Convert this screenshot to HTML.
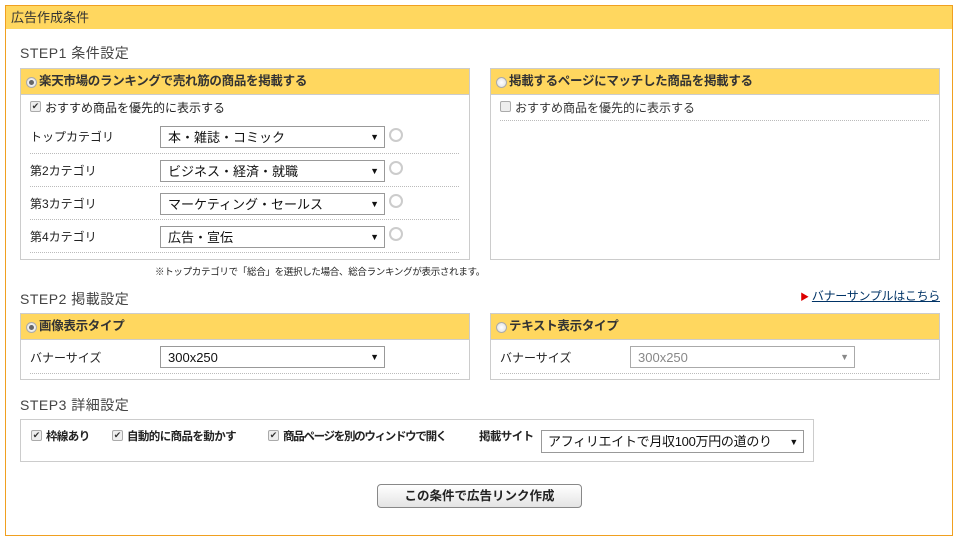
<!DOCTYPE html>
<html><head><meta charset="utf-8"><style>
*{box-sizing:border-box;margin:0;padding:0}
body{width:960px;height:541px;background:#fff;font-family:"Liberation Sans","Noto Sans CJK JP",sans-serif;color:#222;position:relative;overflow:hidden}
.a{position:absolute;white-space:nowrap}
.outer{left:5px;top:5px;width:948px;height:531px;border:1px solid #f0a020}
.hd{left:6px;top:6px;width:946px;height:23px;background:#ffd75f;font-size:13px;line-height:23px;padding-left:5px;color:#333}
.step{font-size:14px;color:#444;letter-spacing:.5px}
.panel{border:1px solid #ccc;background:#fff}
.ph{position:absolute;left:0;top:0;right:0;height:26px;background:#ffd75f;border-bottom:1px solid #ccc;font-size:12.5px;font-weight:bold;line-height:25px;padding-left:18px;color:#333;letter-spacing:-.3px}
.rad{position:absolute;width:11px;height:11px;border-radius:50%;border:1px solid #aaa;background:radial-gradient(circle,#fff,#ddd)}
.rad.on::after{content:"";position:absolute;left:2px;top:2px;width:5px;height:5px;border-radius:50%;background:#666}
.lbl{font-size:12px}
.dot{position:absolute;height:0;border-top:1px dotted #bbb}
.sel{position:absolute;height:22px;border:1px solid #999;background:#fff;font-size:13px;line-height:21px;padding-left:7px;color:#111;white-space:nowrap}
.sel::after{content:"▼";position:absolute;right:5px;top:0;font-size:9px}
.sel.dis{color:#888;border-color:#aaa}
.sel.dis::after{color:#888}
.cb{position:absolute;width:11px;height:11px;border:1px solid #aaa;background:#eee;border-radius:2px;font-size:9px;line-height:9px;text-align:center;color:#333}
.ring{position:absolute;width:14px;height:14px;border-radius:50%;border:2px solid #ccc}
.s3{font-size:11.5px;font-weight:bold;letter-spacing:-.6px}
</style></head><body>
<div class="a outer"></div>
<div class="a hd">広告作成条件</div>
<div class="a step" style="left:20px;top:43px">STEP1 条件設定</div>

<div class="a panel" style="left:20px;top:68px;width:450px;height:192px">
<div class="ph">楽天市場のランキングで売れ筋の商品を掲載する</div>
<div class="rad on" style="left:5px;top:8px"></div>
</div>
<div class="cb a" style="left:30px;top:101px">✔</div>
<div class="a lbl" style="left:45px;top:99px">おすすめ商品を優先的に表示する</div>
<div class="a lbl" style="left:30px;top:128px">トップカテゴリ</div>
<div class="sel" style="left:160px;top:126px;width:225px">本・雑誌・コミック</div>
<div class="ring" style="left:389px;top:128px"></div>
<div class="dot" style="left:30px;top:153px;width:429px"></div>
<div class="a lbl" style="left:30px;top:162px">第2カテゴリ</div>
<div class="sel" style="left:160px;top:160px;width:225px">ビジネス・経済・就職</div>
<div class="ring" style="left:389px;top:161px"></div>
<div class="dot" style="left:30px;top:186px;width:429px"></div>
<div class="a lbl" style="left:30px;top:195px">第3カテゴリ</div>
<div class="sel" style="left:160px;top:193px;width:225px">マーケティング・セールス</div>
<div class="ring" style="left:389px;top:194px"></div>
<div class="dot" style="left:30px;top:219px;width:429px"></div>
<div class="a lbl" style="left:30px;top:228px">第4カテゴリ</div>
<div class="sel" style="left:160px;top:226px;width:225px">広告・宣伝</div>
<div class="ring" style="left:389px;top:227px"></div>
<div class="dot" style="left:30px;top:252px;width:429px"></div>

<div class="a panel" style="left:490px;top:68px;width:450px;height:192px">
<div class="ph">掲載するページにマッチした商品を掲載する</div>
<div class="rad" style="left:5px;top:8px"></div>
</div>
<div class="cb a" style="left:500px;top:101px"></div>
<div class="a lbl" style="left:515px;top:99px;color:#333">おすすめ商品を優先的に表示する</div>
<div class="dot" style="left:500px;top:120px;width:429px"></div>

<div class="a" style="left:155px;top:264px;font-size:9.5px;letter-spacing:-.3px">※トップカテゴリで「総合」を選択した場合、総合ランキングが表示されます。</div>

<div class="a step" style="left:20px;top:289px">STEP2 掲載設定</div>
<div class="a" style="right:20px;top:287px;font-size:12px;letter-spacing:-.3px"><span style="color:#d00;font-size:9px">▶</span> <span style="color:#036;text-decoration:underline">バナーサンプルはこちら</span></div>

<div class="a panel" style="left:20px;top:313px;width:450px;height:67px">
<div class="ph">画像表示タイプ</div>
<div class="rad on" style="left:5px;top:8px"></div>
</div>
<div class="a lbl" style="left:30px;top:349px">バナーサイズ</div>
<div class="sel" style="left:160px;top:346px;width:225px">300x250</div>
<div class="dot" style="left:30px;top:373px;width:429px"></div>

<div class="a panel" style="left:490px;top:313px;width:450px;height:67px">
<div class="ph">テキスト表示タイプ</div>
<div class="rad" style="left:5px;top:8px"></div>
</div>
<div class="a lbl" style="left:500px;top:349px">バナーサイズ</div>
<div class="sel dis" style="left:630px;top:346px;width:225px">300x250</div>
<div class="dot" style="left:500px;top:373px;width:429px"></div>

<div class="a step" style="left:20px;top:395px">STEP3 詳細設定</div>
<div class="a" style="left:20px;top:419px;width:794px;height:43px;border:1px solid #ccc"></div>
<div class="cb a" style="left:31px;top:430px">✔</div>
<div class="a s3" style="left:46px;top:428px">枠線あり</div>
<div class="cb a" style="left:112px;top:430px">✔</div>
<div class="a s3" style="left:127px;top:428px">自動的に商品を動かす</div>
<div class="cb a" style="left:268px;top:430px">✔</div>
<div class="a s3" style="left:283px;top:428px;letter-spacing:-1.3px">商品ページを別のウィンドウで開く</div>
<div class="a s3" style="left:479px;top:428px">掲載サイト</div>
<div class="sel" style="left:541px;top:430px;width:263px;height:23px;line-height:22px;font-size:13px;padding-left:6px;letter-spacing:-.3px">アフィリエイトで月収100万円の道のり</div>

<div class="a" style="left:377px;top:484px;width:205px;height:24px;border:1px solid #888;border-radius:4px;background:linear-gradient(#fff,#e4e4e4);font-size:12.5px;font-weight:bold;text-align:center;line-height:22px">この条件で広告リンク作成</div>
</body></html>
